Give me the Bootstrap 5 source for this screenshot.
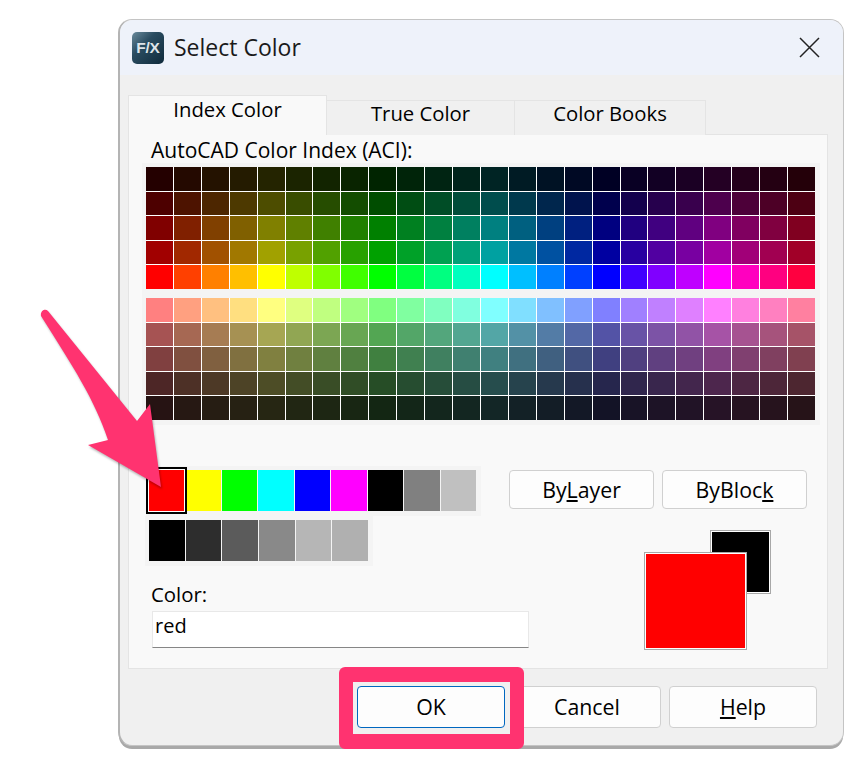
<!DOCTYPE html>
<html lang="en">
<head>
<meta charset="utf-8">
<title>Select Color</title>
<link rel="stylesheet" href="https://cdn.jsdelivr.net/npm/bootstrap@5.3.0/dist/css/bootstrap.min.css">
<style>
html,body{background:#fff;height:762px;overflow:hidden}
body{font-family:"Open Sans","Noto Sans",sans-serif;color:#000;font-size:20px;line-height:1.3}
.stage{position:relative;width:866px;height:762px;padding:19px 0 0 118px}
.dlg{position:relative;width:726px;height:727px;background:#f0f0f0;border:1px solid #c4c4c4;border-left:2px solid #b4b4b4;border-radius:14px;box-shadow:0 4px 0 -1px #a9a9a9;display:flex;flex-direction:column}
.titlebar{height:55px;flex:none;background:#eef2fa;border-radius:13px 13px 0 0;padding:0 23px 0 12px}
.fx{width:32px;height:32px;border-radius:5px;background:linear-gradient(135deg,#6a8a9c 0%,#2a4c60 38%,#0f2a3b 100%);color:#dfe5e9;font:700 15.5px/32px "Liberation Sans",sans-serif;text-align:center;letter-spacing:-.2px}
.ttl{font-size:23px;margin-left:10px;color:#1a1a1a;line-height:1.2}
.tabstrip{height:40px;margin:20px 0 0 8px;flex:none;align-items:flex-end;flex-wrap:nowrap;position:relative;z-index:1}
.tabitem{height:35px;width:188px;background:#f0f0f0;border:1px solid #e4e4e4;border-bottom:0;border-left:0;text-align:center;font-size:20.3px;line-height:1.3;padding-bottom:10px;display:flex;align-items:center;justify-content:center}
.tabitem:last-child{width:191px}
.tabitem.on{height:40px;width:199px;background:#f9f9f9;border-left:1px solid #e4e4e4;padding-bottom:13px}
.panel{margin:-1px 0 0 8px;width:700px;height:535px;flex:none;background:#f9f9f9;border:1px solid #e4e4e4;padding:3px 0 0 13px}
.aci-label{padding-left:9px;height:25px;font-size:21px;line-height:1.2}
.aci{width:678px;height:262px;background:#f4f4f4;padding:4px 5px 5px 4px;display:flex;flex-direction:column;gap:9px}
.aci-grid{display:grid;grid-template-columns:repeat(24,1fr);grid-template-rows:repeat(5,1fr);gap:1px;background:#fff;height:122px}
.stdrow{margin-top:41px;height:50px}
.stdbox{width:335px;height:50px;margin-left:4px;background:#f4f4f4;padding:4px 5px 5px 3px;display:grid;grid-template-columns:repeat(9,1fr);gap:1px}
.graybox{width:228px;height:50px;background:#f4f4f4;padding:4px 5px 5px 4px;display:grid;grid-template-columns:repeat(6,1fr);gap:1px;margin-left:3px}
.sel{position:relative;z-index:1;outline:2px solid #000;outline-offset:1px;box-shadow:0 0 0 1px #fff}
.dlg-btn{--bs-btn-padding-x:0;--bs-btn-padding-y:0;--bs-btn-font-size:21.3px;--bs-btn-line-height:1.2;--bs-btn-color:#000;--bs-btn-bg:#fdfdfd;--bs-btn-border-color:#d0d0d0;--bs-btn-hover-color:#000;--bs-btn-hover-bg:#fdfdfd;--bs-btn-hover-border-color:#d0d0d0;--bs-btn-border-radius:4px}
.btn-sm1{width:145px;height:39px}
.btn-sm2{width:148px;height:42px}
.btn-ok{--bs-btn-border-color:#0067c0;--bs-btn-hover-border-color:#0067c0}
.stdbtns{margin-left:auto;margin-right:20px;margin-top:4px;gap:8px}
.lower{height:150px}
.lowleft{width:385px}
.color-label{margin:15px 0 0 9px;height:30px;font-size:20.4px}
.color-input{width:377px;height:37px;margin-left:10px;padding:0 2px 8px;font-size:20px;color:#000;font-family:inherit;background:#fff;border:1px solid #e8e8e8;border-bottom-color:#868686;box-shadow:none}
.preview{position:relative;width:127px;height:120px;margin:14px 0 0 117px;flex:none}
.pv{position:absolute;border:1px solid #a8a8a8;outline:1px solid #fff;outline-offset:-2px}
.pv-b{left:66px;top:0;width:61px;height:64px;background:#000}
.pv-r{left:0;top:22px;width:103px;height:98px;background:#f00}
.footer{margin:17px 0 0 0;padding-right:26px;gap:8px;height:42px}
.hilite{position:absolute;left:219px;top:647px;width:185px;height:82px;border:solid #ff3370;border-width:15px 14px;border-radius:6px}
.arrow{position:absolute;left:36px;top:305px;width:135px;height:190px;z-index:5;overflow:visible;filter:drop-shadow(1px 2px 1px rgba(0,0,0,.28))}
.closex{width:21px;height:21px}
</style>
</head>
<body>
<div class="stage">
  <div class="dlg">
    <div class="titlebar d-flex align-items-center">
      <div class="fx">F/X</div>
      <div class="ttl">Select Color</div>
      <svg class="closex ms-auto" viewBox="0 0 21 21"><path d="M1 1 20 20M20 1 1 20" stroke="#222" stroke-width="1.5" fill="none"/></svg>
    </div>
    <div class="nav tabstrip">
      <div class="tabitem on">Index Color</div>
      <div class="tabitem">True Color</div>
      <div class="tabitem">Color Books</div>
    </div>
    <div class="panel">
      <div class="aci-label">AutoCAD Color Index (ACI):</div>
      <div class="aci">
        <div class="aci-grid" id="g1"></div>
        <div class="aci-grid" id="g2"></div>
      </div>
      <div class="stdrow d-flex">
        <div class="stdbox" id="std"></div>
        <div class="d-flex stdbtns">
          <button class="btn dlg-btn btn-sm1">By<u>L</u>ayer</button>
          <button class="btn dlg-btn btn-sm1">ByBloc<u>k</u></button>
        </div>
      </div>
      <div class="lower d-flex">
        <div class="lowleft">
          <div class="graybox" id="gray"></div>
          <div class="color-label">Color:</div>
          <input class="form-control rounded-0 color-input" value="red">
        </div>
        <div class="preview">
          <div class="pv pv-b"></div>
          <div class="pv pv-r"></div>
        </div>
      </div>
    </div>
    <div class="footer d-flex justify-content-end">
      <button class="btn dlg-btn btn-sm2 btn-ok">OK</button>
      <button class="btn dlg-btn btn-sm2">Cancel</button>
      <button class="btn dlg-btn btn-sm2"><u>H</u>elp</button>
    </div>
    <div class="hilite"></div>
  </div>
  <svg class="arrow" viewBox="36 305 135 190"><path d="M41 316C40 311 45 308 48 311L137 421 150 404 161 487 88 445 108 440C95 400 72 365 41 316Z" fill="#ff3370"/></svg>
</div>
<script>
const hues=[[255,0,0],[255,64,0],[255,128,0],[255,191,0],[255,255,0],[191,255,0],[128,255,0],[64,255,0],[0,255,0],[0,255,64],[0,255,128],[0,255,191],[0,255,255],[0,191,255],[0,128,255],[0,64,255],[0,0,255],[64,0,255],[128,0,255],[191,0,255],[255,0,255],[255,0,191],[255,0,128],[255,0,64]];
const cell=(p,c,cl)=>{const d=document.createElement('div');d.style.background=c;if(cl)d.className=cl;p.appendChild(d)};
const rgb=a=>'rgb('+a.map(Math.round).join(',')+')';
const g1=document.getElementById('g1'),g2=document.getElementById('g2');
[.14,.3,.5,.63,1].forEach(f=>hues.forEach(h=>cell(g1,rgb(h.map(v=>v*f)))));
[1,.65,.5,.3,.15].forEach(f=>hues.forEach(h=>cell(g2,rgb(h.map(v=>(127.5+v/2)*f)))));
['#f00','#ff0','#0f0','#0ff','#00f','#f0f','#000','#808080','#c0c0c0'].forEach((c,i)=>cell(document.getElementById('std'),c,i?'':'sel'));
['#000','#2d2d2d','#5b5b5b','#898989','#b6b6b6','#b0b0b0'].forEach(c=>cell(document.getElementById('gray'),c));
</script>
</body>
</html>
